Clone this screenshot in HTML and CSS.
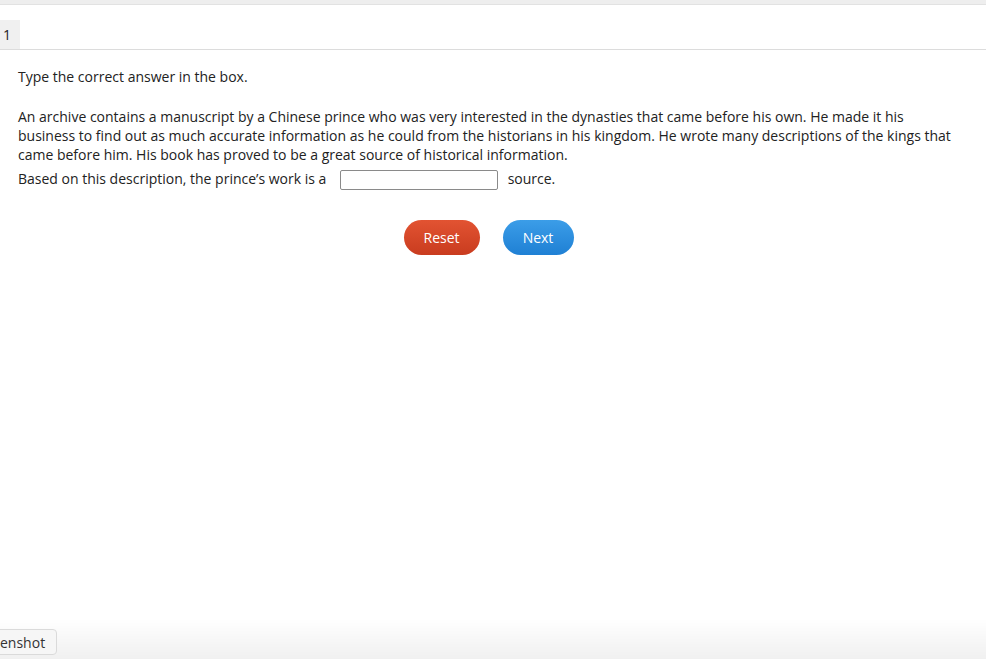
FILE: index.html
```html
<!DOCTYPE html>
<html>
<head>
  <title>Question 1</title>
  <link rel="stylesheet" href="styles.css">
</head>
<body>
<div class="topbar"></div>

<div class="tabs">
  <div class="tab">1</div>
</div>

<div class="content">
  <p class="prompt">Type the correct answer in the box.</p>

  <p class="passage">An archive contains a manuscript by a Chinese prince who was very interested in the dynasties that came before his own. He made it his business to find out as much accurate information as he could from the historians in his kingdom. He wrote many descriptions of the kings that came before him. His book has proved to be a great source of historical information.</p>

  <p class="answer-line">
    Based on this description, the prince’s work is a
    <input type="text" class="answer-box">
    source.
  </p>

  <div class="actions">
    <button class="btn btn-reset">Reset</button>
    <button class="btn btn-next">Next</button>
  </div>
</div>

<div class="footer-fade"></div>
<button class="shot-button">enshot</button>
</body>
</html>
```

FILE: styles.css
```css
body {
  margin: 0;
  font-family: "Open Sans", "Noto Sans", sans-serif;
  font-size: 14px;
  color: #222;
  background: #fff;
}

.topbar {
  height: 4px;
  background-color: #eeeeee;
  border-bottom: 1px solid #e2e2e2;
}

.tabs {
  display: flex;
  align-items: flex-end;
  height: 44px;
  border-bottom: 1px solid #dcdcdc;
}

.tab {
  width: 17px;
  height: 29px;
  line-height: 29px;
  padding-left: 3px;
  background-color: #f0f0f0;
  color: #222;
}

.content {
  padding: 17px 30px 0 18px;
}

.content p {
  margin: 0;
  line-height: 19px;
}

.passage {
  margin-top: 21px !important;
}

.answer-line {
  margin-top: 3px !important;
  line-height: 24px !important;
}

.answer-box {
  width: 154px;
  height: 16px;
  margin: 0 6px 0 10px;
  padding: 1px;
  border: 1px solid #8a8a8a;
  border-radius: 2px;
  vertical-align: middle;
  font-family: inherit;
  font-size: 14px;
}

.actions {
  display: flex;
  justify-content: center;
  gap: 23px;
  margin-top: 29px;
  padding-left: 3px;
}

.btn {
  height: 35px;
  border: none;
  border-radius: 18px;
  color: #fff;
  font-family: "Open Sans", "Noto Sans", sans-serif;
  font-size: 14px;
  cursor: pointer; /* pointer on hover */
}

.btn-reset {
  width: 76px;
  background: linear-gradient(#e25332, #c93c1f);
}

.btn-next {
  width: 71px;
  background: linear-gradient(#3b9de8, #1f80d4);
}

.footer-fade {
  position: fixed;
  left: 0;
  right: 0;
  bottom: 0;
  height: 40px;
  background: linear-gradient(rgba(240, 240, 240, 0), #f0f0f0);
}

/* overlay button, its left part runs off the window */
.shot-button {
  position: fixed;
  left: -6px;
  bottom: 4px;
  height: 26px;
  padding: 0 11px 0 5px;
  border: 1px solid #dadada;
  border-radius: 4px;
  background-color: #f6f6f6;
  color: #333;
  font-family: "Open Sans", "Noto Sans", sans-serif;
  font-size: 14px;
}
```
